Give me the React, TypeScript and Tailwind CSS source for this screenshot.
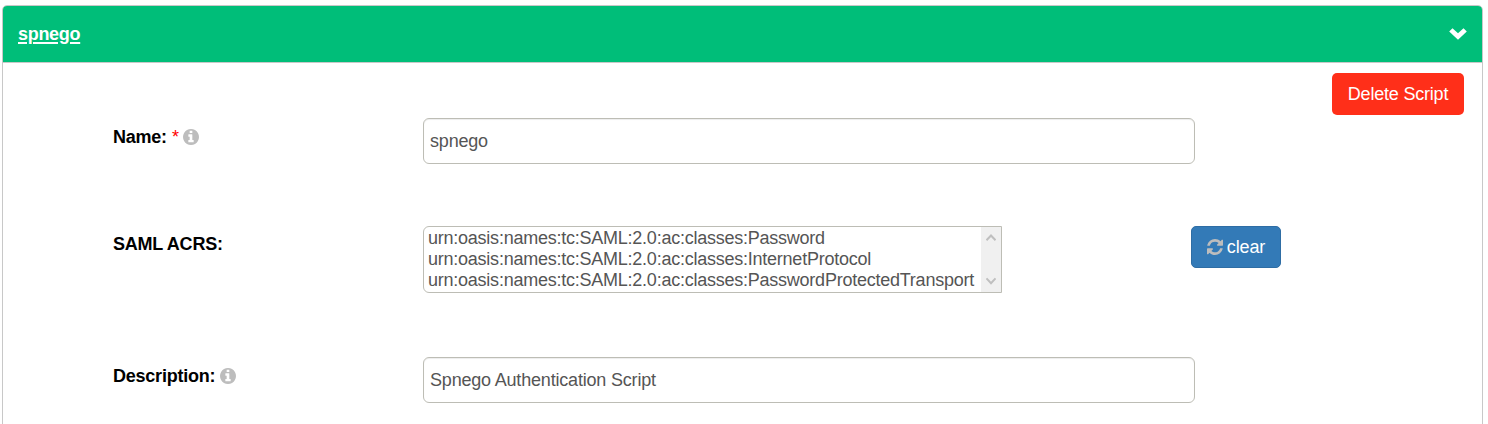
import React from "react";

const INFO_PATH =
  "M1024 1248v-160q0-14-9-23t-23-9h-96v-512q0-14-9-23t-23-9h-320q-14 0-23 9t-9 23v160q0 14 9 23t23 9h96v320h-96q-14 0-23 9t-9 23v160q0 14 9 23t23 9h448q14 0 23-9t9-23zm-128-896v-160q0-14-9-23t-23-9h-192q-14 0-23 9t-9 23v160q0 14 9 23t23 9h192q14 0 23-9t9-23zm640 416q0 209-103 385.5t-279.5 279.5-385.5 103-385.5-103-279.5-279.5-103-385.5 103-385.5 279.5-279.5 385.5-103 385.5 103 279.5 279.5 103 385.5z";

const REFRESH_PATH =
  "M1511 928q0 5-1 7-64 268-268 434.5t-478 166.5q-146 0-282.5-55t-243.5-157l-129 129q-19 19-45 19t-45-19-19-45v-448q0-26 19-45t45-19h448q26 0 45 19t19 45-19 45l-137 137q71 66 161 102t187 36q134 0 250-65t186-179q11-17 53-117 8-23 30-23h192q13 0 22.5 9.5t9.5 22.5zm25-800v448q0 26-19 45t-45 19h-448q-26 0-45-19t-19-45 19-45l138-138q-148-137-349-137-134 0-250 65t-186 179q-11 17-53 117-8 23-30 23h-199q-13 0-22.5-9.5t-9.5-22.5v-7q65-268 270-434.5t480-166.5q146 0 284 55.5t245 156.5l130-129q19-19 45-19t45 19 19 45z";

const ACRS = [
  "urn:oasis:names:tc:SAML:2.0:ac:classes:Password",
  "urn:oasis:names:tc:SAML:2.0:ac:classes:InternetProtocol",
  "urn:oasis:names:tc:SAML:2.0:ac:classes:PasswordProtectedTransport",
];

function Info() {
  return (
    <svg viewBox="0 0 1536 1536" className="size-4 shrink-0 fill-[#bdbdbd]">
      <path d={INFO_PATH} />
    </svg>
  );
}

function Label({ text, required, info }: { text: string; required?: boolean; info?: boolean }) {
  return (
    <div className="flex h-6 w-[310px] shrink-0 items-center text-[18px] font-bold tracking-[-0.23px] text-black">
      <span>{text}</span>
      {required && <span className="-mr-px ml-[5px] font-normal text-[#f00]">*</span>}
      {info && (
        <span className="ml-[5px]">
          <Info />
        </span>
      )}
    </div>
  );
}

function Field({ value }: { value: string }) {
  return (
    <div className="flex h-[46px] w-[772px] items-center rounded-md border border-[#bdbdb5] bg-white px-1.5 text-[18px] tracking-[-0.19px] text-[#555] shadow-[inset_0_1px_1px_rgba(0,0,0,0.075)]">
      {value}
    </div>
  );
}

export default function App() {
  return (
    <main className="h-[424px] overflow-hidden bg-white pl-0.5 pt-[5px] font-['Liberation_Sans',Arial,sans-serif]">
      <section className="h-[440px] w-[1481px] rounded-t-[5px] border border-[#c8c8c8]">
        <header className="flex h-[57px] items-center justify-between rounded-t border-b border-[#c8c8c8] bg-[#00be79] px-[15px]">
          <a className="text-[18px] font-bold tracking-[-0.3px] text-white underline decoration-2 underline-offset-[2px]">
            spnego
          </a>
          <svg viewBox="0 0 18 12" className="h-3 w-[18px] fill-white">
            <path d="M.2 3.5 3.5.2 9 5.2 14.5.2l3.3 3.3L9 11.7Z" />
          </svg>
        </header>
        <div className="flex h-[55px] justify-end pr-[18px] pt-2.5">
          <button className="h-[42px] w-[132px] rounded-[5px] bg-[#ff2f19] text-[18px] tracking-[-0.2px] text-white">
            Delete Script
          </button>
        </div>
        <div className="flex h-[108px] items-start pl-[110px]">
          <div className="pt-[7px]">
            <Label text="Name:" required info />
          </div>
          <Field value="spnego" />
        </div>
        <div className="flex h-[131px] items-start pl-[110px]">
          <div className="pt-[6px]">
            <Label text="SAML ACRS:" />
          </div>
          <div className="flex h-[67px] w-[579px] overflow-hidden rounded-l-md border border-[#bdbdb5] bg-white">
            <ul className="w-[557px] whitespace-nowrap pl-1 pt-px text-[18px] leading-[21px] tracking-[-0.24px] text-[#555]">
              {ACRS.map((acr) => (
                <li key={acr}>{acr}</li>
              ))}
            </ul>
            <div className="ml-auto flex w-5 flex-col items-center justify-between bg-[#f0f0f0] py-[7px]">
              <svg viewBox="0 0 10 8" className="h-2 w-2.5 fill-none stroke-[#bfbfbf] stroke-2">
                <path d="M.5 6.3 5 1.5l4.5 4.8" />
              </svg>
              <svg viewBox="0 0 10 8" className="h-2 w-2.5 fill-none stroke-[#bfbfbf] stroke-2">
                <path d="M.5 1.4 5 6.2l4.5-4.8" />
              </svg>
            </div>
          </div>
          <button className="ml-[189px] flex h-[42px] w-[90px] items-center justify-center gap-1 rounded-[5px] border border-[#2e6da4] bg-[#337ab7] text-[18px] text-white">
            <svg viewBox="0 0 1536 1536" className="size-4 fill-[#bdbdbd]">
              <path d={REFRESH_PATH} />
            </svg>
            <span className="tracking-[-0.1px]">clear</span>
          </button>
        </div>
        <div className="flex items-start pl-[110px]">
          <div className="pt-[7px]">
            <Label text="Description:" info />
          </div>
          <Field value="Spnego Authentication Script" />
        </div>
      </section>
    </main>
  );
}
